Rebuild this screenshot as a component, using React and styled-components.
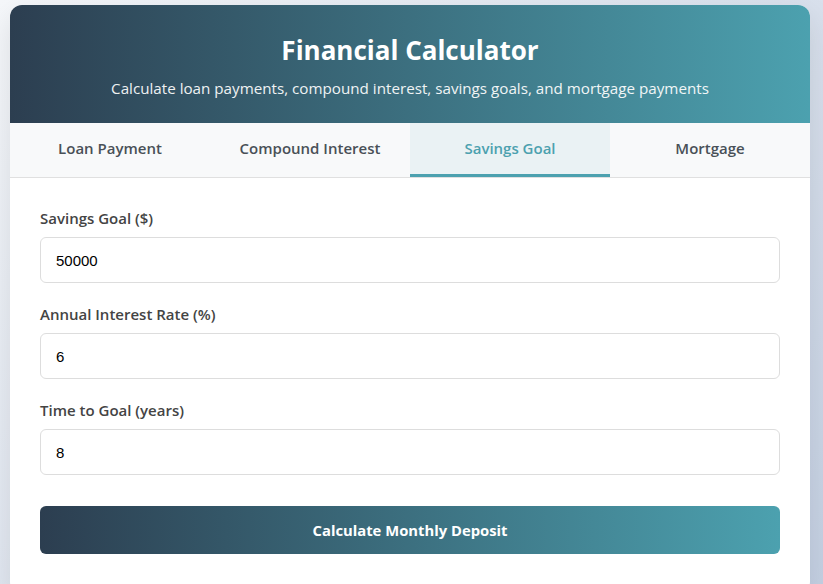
import React, { useState } from 'react';
import styled, { createGlobalStyle } from 'styled-components';

const GlobalStyle = createGlobalStyle`
  * {
    box-sizing: border-box;
  }
  html, body {
    margin: 0;
    padding: 0;
  }
  body {
    min-height: 100vh;
    background: linear-gradient(135deg, #f5f7fa 0%, #c3cfe2 100%);
    font-family: "Open Sans", "Noto Sans", sans-serif;
  }
`;

const Page = styled.div`
  padding: 5px 10px 20px;
`;

const Card = styled.div`
  width: 800px;
  background: white;
  border-radius: 12px;
  overflow: hidden;
  box-shadow: 0 10px 30px rgba(0, 0, 0, 0.1);
`;

const Header = styled.div`
  background: linear-gradient(90deg, #2c3e50 0%, #4ca1af 100%);
  color: white;
  text-align: center;
  padding: 30px 20px 25px;
`;

const Title = styled.h1`
  margin: 0 0 12px;
  font-size: 26px;
  line-height: 31px;
  font-weight: 700;
`;

const Subtitle = styled.p`
  margin: 0;
  font-size: 15.2px;
  line-height: 20px;
  opacity: 0.92;
`;

const Tabs = styled.div`
  display: flex;
  background: #f8f9fa;
  border-bottom: 1px solid #e0e0e0;
`;

const Tab = styled.button`
  flex: 1;
  border: none;
  border-bottom: 3px solid ${(props) => (props.active ? '#4ca1af' : 'transparent')};
  background: ${(props) => (props.active ? 'rgba(76, 161, 175, 0.08)' : 'transparent')};
  color: ${(props) => (props.active ? '#4ca1af' : '#495057')};
  font-family: inherit;
  font-size: 15px;
  font-weight: 600;
  line-height: 21px;
  padding: 15px 10px;
  cursor: pointer;
`;

const Form = styled.div`
  padding: 30px 30px 40px;
`;

const Group = styled.div`
  margin-bottom: 21px;
`;

const Label = styled.label`
  display: block;
  font-size: 15px;
  line-height: 21px;
  font-weight: 600;
  color: #444;
  margin-bottom: 8px;
`;

const Input = styled.input`
  display: block;
  width: 100%;
  height: 46px;
  padding: 0 15px;
  border: 1px solid #dddddd;
  border-radius: 6px;
  font-family: "Liberation Sans", Arial, sans-serif;
  font-size: 15px;
  color: #000;
  outline: none;
`;

const Button = styled.button`
  display: block;
  width: 100%;
  margin-top: 31px;
  height: 48px;
  border: none;
  border-radius: 6px;
  background: linear-gradient(90deg, #2c3e50 0%, #4ca1af 100%);
  color: white;
  font-family: inherit;
  font-size: 14.8px;
  font-weight: 700;
  cursor: pointer;
`;

const tabs = ['Loan Payment', 'Compound Interest', 'Savings Goal', 'Mortgage'];

const fields = [
  { label: 'Savings Goal ($)', value: '50000' },
  { label: 'Annual Interest Rate (%)', value: '6' },
  { label: 'Time to Goal (years)', value: '8' },
];

export default function App() {
  const [active, setActive] = useState('Savings Goal');
  const [values, setValues] = useState(fields.map((f) => f.value));

  return (
    <Page>
      <GlobalStyle />
      <Card>
        <Header>
          <Title>Financial Calculator</Title>
          <Subtitle>
            Calculate loan payments, compound interest, savings goals, and mortgage payments
          </Subtitle>
        </Header>
        <Tabs>
          {tabs.map((t) => (
            <Tab key={t} active={t === active} onClick={() => setActive(t)}>
              {t}
            </Tab>
          ))}
        </Tabs>
        <Form>
          {fields.map((f, i) => (
            <Group key={f.label}>
              <Label>{f.label}</Label>
              <Input
                type="number"
                value={values[i]}
                onChange={(e) => {
                  const next = [...values];
                  next[i] = e.target.value;
                  setValues(next);
                }}
              />
            </Group>
          ))}
          <Button>Calculate Monthly Deposit</Button>
        </Form>
      </Card>
    </Page>
  );
}
